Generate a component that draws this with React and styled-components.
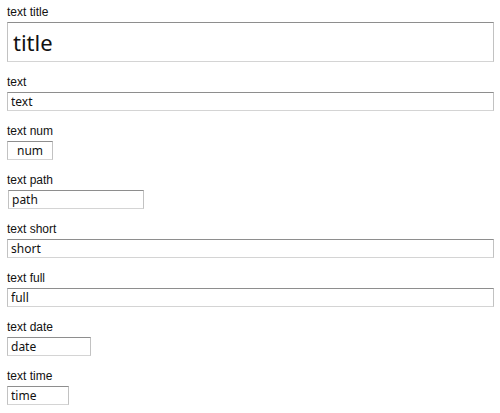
import styled, { createGlobalStyle } from 'styled-components';

const GlobalStyle = createGlobalStyle`
  body {
    margin: 0;
    background: #ffffff;
  }
`;

const fields = [
  { label: 'text title', value: 'title', size: 'title' },
  { label: 'text', value: 'text', size: 'full' },
  { label: 'text num', value: 'num', size: 'num' },
  { label: 'text path', value: 'path', size: 'path' },
  { label: 'text short', value: 'short', size: 'full' },
  { label: 'text full', value: 'full', size: 'full' },
  { label: 'text date', value: 'date', size: 'date' },
  { label: 'text time', value: 'time', size: 'time' },
];

const widths = {
  title: '487px',
  full: '487px',
  num: '46px',
  path: '136px',
  date: '84px',
  time: '62px',
};

export default function App() {
  return (
    <>
      <GlobalStyle />
      <Form>
        {fields.map(field => (
          <Field key={field.label}>
            <Label>{field.label}</Label>
            <Input
              $size={field.size}
              defaultValue={field.value}
              readOnly
            />
          </Field>
        ))}
      </Form>
    </>
  );
}

const Form = styled.div`
  display: flex;
  flex-direction: column;
  gap: 13px;
  padding: 5px 0 0 7px;
`;

const Field = styled.div`
  display: flex;
  flex-direction: column;
  align-items: flex-start;
  gap: 2px;
`;

const Label = styled.label`
  font-family: 'Liberation Sans', Arial, sans-serif;
  font-size: 12px;
  line-height: 15px;
  color: #111111;
`;

const Input = styled.input`
  box-sizing: border-box;
  width: ${props => widths[props.$size]};
  height: ${props => (props.$size === 'title' ? '40px' : '19px')};
  margin: 0 0 0 ${props => (props.$size === 'path' ? '1px' : '0')};
  padding: 0 ${props => (props.$size === 'title' ? '5px' : '3px')};
  border: 1px solid #c2c2c2;
  border-top-color: #8e8e8e;
  border-bottom-color: #d4d4d4;
  border-radius: 0;
  outline: none;
  background: #ffffff;
  color: #111111;
  font-family: 'Noto Sans', 'DejaVu Sans', sans-serif;
  font-size: ${props => (props.$size === 'title' ? '22px' : '12px')};
  text-align: ${props => (props.$size === 'num' ? 'center' : 'left')};
`;
